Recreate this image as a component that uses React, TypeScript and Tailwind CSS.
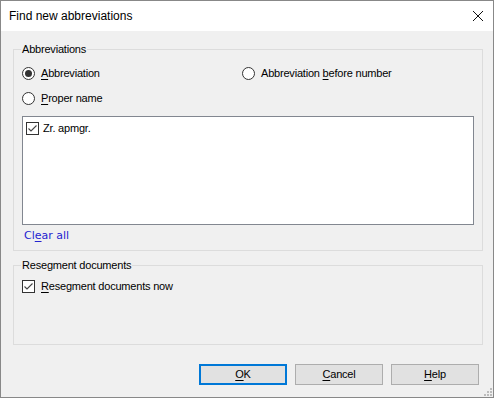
import React, { useState } from 'react';

const font = "font-['Liberation_Sans',Arial,sans-serif]";

// letter with access-key underline
function Key({ children }: { children: React.ReactNode }) {
  return <span className="underline underline-offset-[2px]">{children}</span>;
}

function Radio({ checked, onClick, children }: { checked: boolean; onClick: () => void; children: React.ReactNode }) {
  return (
    <div className="flex items-center h-[18px] cursor-default" onClick={onClick}>
      <div className="w-[13px] h-[13px] rounded-full border border-[#333333] bg-white flex items-center justify-center">
        {checked && <div className="w-[7px] h-[7px] rounded-full bg-[#333333]" />}
      </div>
      <span className="ml-[6px] text-[11px] tracking-[-0.2px] text-black leading-[16px]">{children}</span>
    </div>
  );
}

function CheckBox({ checked, onClick }: { checked: boolean; onClick: () => void }) {
  return (
    <div onClick={onClick} className="w-[13px] h-[13px] border border-[#333333] bg-white flex items-center justify-center shrink-0">
      {checked && (
        <svg width="11" height="11" viewBox="0 0 11 11">
          <path d="M1.5 5.5 L4 8 L9.5 2.5" stroke="#444444" strokeWidth="1.1" fill="none" />
        </svg>
      )}
    </div>
  );
}

export default function App() {
  const [mode, setMode] = useState('abbr');
  const [item, setItem] = useState(true);
  const [reseg, setReseg] = useState(true);

  return (
    <div className={`w-[494px] h-[398px] border border-[#888888] bg-[#f0f0f0] flex flex-col ${font}`}>
      {/* --- TITLE BAR --- */}
      <div className="h-[30px] bg-white flex items-center justify-between shrink-0">
        <span className="ml-[8px] text-[12px] text-black">Find new abbreviations</span>
        <svg width="12" height="12" viewBox="0 0 12 12" className="mr-[9px]">
          <path d="M1 1 L11 11 M11 1 L1 11" stroke="#111111" strokeWidth="1" />
        </svg>
      </div>

      {/* --- ABBREVIATIONS GROUP --- */}
      <fieldset className="mt-[10px] ml-[12px] mr-[10px] border border-[#dcdcdc] px-[8px] pb-[6px]">
        <legend className="-ml-[1px] px-[1px] text-[11px] tracking-[-0.2px] leading-[16px] text-black">Abbreviations</legend>
        <div className="flex mt-[7px]">
          <div className="w-[220px]">
            <Radio checked={mode === 'abbr'} onClick={() => setMode('abbr')}>
              <Key>A</Key>bbreviation
            </Radio>
          </div>
          <Radio checked={mode === 'num'} onClick={() => setMode('num')}>
            Abbreviation <Key>b</Key>efore number
          </Radio>
        </div>
        <div className="mt-[7px]">
          <Radio checked={mode === 'proper'} onClick={() => setMode('proper')}>
            <Key>P</Key>roper name
          </Radio>
        </div>
        <div className="mt-[9px] h-[109px] border border-[#828790] bg-white px-[3px] py-[2px]">
          <div className="flex items-center h-[16px] mt-[1px]">
            <CheckBox checked={item} onClick={() => setItem(!item)} />
            <span className="ml-[4px] text-[11px] tracking-[-0.2px] text-black">Zr. apmgr.</span>
          </div>
        </div>
        <div className="mt-[3px] h-[16px] flex items-center">
          <span className="ml-[2px] text-[11px] text-[#2424d0] font-['DejaVu_Sans',Verdana,sans-serif] cursor-pointer" onClick={() => setItem(false)}>
            Cl<Key>e</Key>ar all
          </span>
        </div>
      </fieldset>

      {/* --- RESEGMENT GROUP --- */}
      <fieldset className="mt-[6px] ml-[12px] mr-[10px] h-[88px] border border-[#dcdcdc] px-[8px]">
        <legend className="-ml-[1px] px-[1px] text-[11px] tracking-[-0.2px] leading-[16px] text-black">Resegment documents</legend>
        <div className="flex items-center h-[18px] mt-[4px]">
          <CheckBox checked={reseg} onClick={() => setReseg(!reseg)} />
          <span className="ml-[6px] text-[11px] tracking-[-0.2px] text-black">
            <Key>R</Key>esegment documents now
          </span>
        </div>
      </fieldset>

      {/* --- BUTTONS --- */}
      <div className="flex justify-end gap-[8px] mt-[19px] mr-[14px] text-[11px] tracking-[-0.2px]">
        <button className="w-[88px] h-[21px] border-2 border-[#0078d7] bg-[#e1e1e1] text-black">
          <Key>O</Key>K
        </button>
        <button className="w-[88px] h-[21px] border border-[#adadad] bg-[#e1e1e1] text-black">
          <Key>C</Key>ancel
        </button>
        <button className="w-[88px] h-[21px] border border-[#adadad] bg-[#e1e1e1] text-black">
          <Key>H</Key>elp
        </button>
      </div>

      {/* size grip */}
      <div className="flex-1 flex items-end justify-end pr-[1px] pb-[1px]">
        <svg width="8" height="8" viewBox="0 0 8 8">
          <rect x="6" y="0" width="2" height="2" fill="#bcbcbc" />
          <rect x="3" y="3" width="2" height="2" fill="#bcbcbc" />
          <rect x="6" y="3" width="2" height="2" fill="#bcbcbc" />
          <rect x="0" y="6" width="2" height="2" fill="#bcbcbc" />
          <rect x="3" y="6" width="2" height="2" fill="#bcbcbc" />
          <rect x="6" y="6" width="2" height="2" fill="#bcbcbc" />
        </svg>
      </div>
    </div>
  );
}
